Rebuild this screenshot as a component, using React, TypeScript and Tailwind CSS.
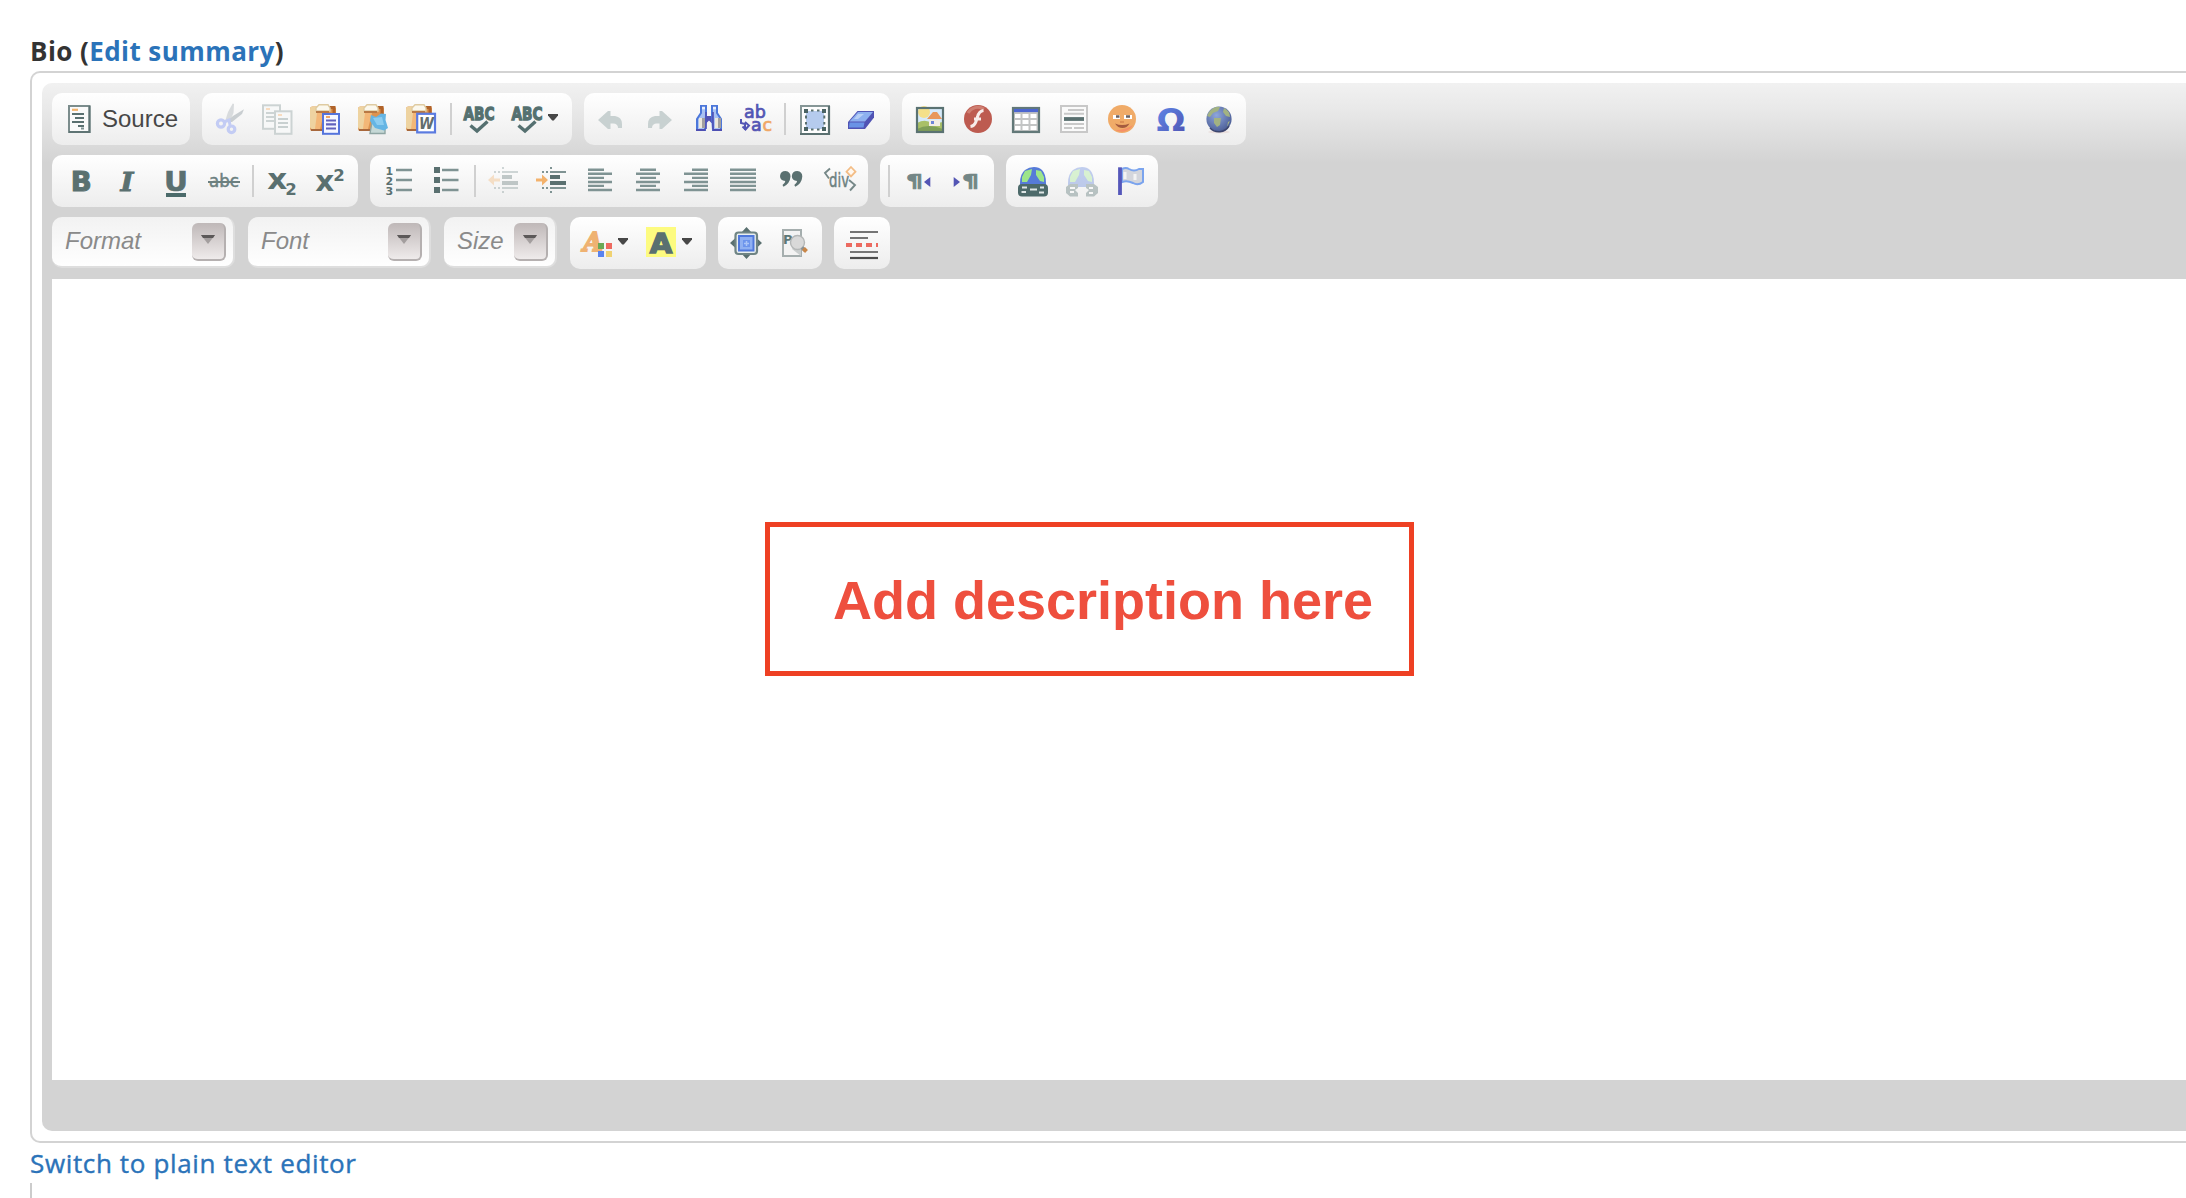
import type { ReactNode } from "react";

const DARK = "#5a7070";
const MID = "#7f9393";

function Glyph({ children, faded }: { children: ReactNode; faded?: boolean }) {
  return (
    <svg
      viewBox="0 0 32 32"
      className={faded ? "size-8 shrink-0 overflow-visible opacity-35" : "size-8 shrink-0 overflow-visible"}
      fontFamily="'DejaVu Sans', sans-serif"
    >
      {children}
    </svg>
  );
}

function Btn({ children, menu }: { children: ReactNode; menu?: boolean }) {
  return (
    <button className={menu ? "flex h-8 w-16 items-center pl-2" : "flex h-8 w-12 items-center pl-2"}>
      {children}
      {menu && (
        <svg viewBox="0 0 10 7" className="mt-[-3px] ml-1 h-[7px] w-2.5 shrink-0">
          <path d="M0 0H10V1.5L5.8 6.5H4.2L0 1.5Z" fill="#474747" />
        </svg>
      )}
    </button>
  );
}

function Group({ children }: { children: ReactNode }) {
  return (
    <div className="flex h-[52px] items-center rounded-[10px] bg-linear-to-b from-white to-[#ededed] px-1">
      {children}
    </div>
  );
}

const Sep = () => <div className="mx-1 h-8 w-0.5 bg-[#d0d0d0]" />;

function Combo({ label, wide }: { label: string; wide?: boolean }) {
  return (
    <div
      className={
        (wide ? "w-[183px]" : "w-[113px]") +
        " mr-px flex h-[51px] items-center justify-between rounded-[10px] border-r-2 border-b-2 border-[#dedede] bg-linear-to-b from-[#f2f2f2] to-white bg-origin-border pr-[7px] pl-[13px] text-2xl text-[#8a8a8a] italic"
      }
    >
      <span className="pb-px">{label}</span>
      <span className="flex h-[38px] w-[34px] items-center justify-center rounded-md border-r-2 border-b-2 border-[#b5b0b0] bg-linear-to-b from-[#bfb8b8] to-[#efebeb]">
        <svg viewBox="0 0 14 9" className="mt-[-2px] h-[9px] w-3.5">
          <path d="M0 0H14L7 9Z" fill="#a39e9e" />
          <path d="M0 0H14L12 3H2Z" fill="#5c5959" />
        </svg>
      </span>
    </div>
  );
}

const SourceIcon = () => (
  <Glyph>
    <rect x="5" y="3" width="20.5" height="26" fill="#fafafa" stroke="#7b8c8c" strokeWidth="2" />
    <path d="M25.5 3V29H5" fill="none" stroke="#5f7474" strokeWidth="2" />
    <path d="M8 6.8H14" stroke="#f3b36b" strokeWidth="2.2" />
    <path d="M8 11H20M11 15H20M8 19H20M14 23H20" stroke={DARK} strokeWidth="2" />
    <path d="M17 25.5H20" stroke={MID} strokeWidth="2" />
  </Glyph>
);

const CutIcon = () => (
  <Glyph>
    <path d="M18.7 0.5L20 1L19.5 10L15.5 19L11.5 17L14 9Z" fill="#d8dbdd" />
    <path d="M30 6.3L28 11L18 19L12 19L19 13Z" fill="#c9ced1" />
    <circle cx="7" cy="20.5" r="3.6" fill="none" stroke="#c3ccf4" strokeWidth="3.2" />
    <circle cx="17.5" cy="26.3" r="3.3" fill="none" stroke="#c3ccf4" strokeWidth="3.2" />
    <path d="M10 19L15 17L16 22" fill="none" stroke="#c3ccf4" strokeWidth="3" />
  </Glyph>
);

const CopyIcon = () => (
  <Glyph>
    <rect x="1" y="2.3" width="17" height="23.5" fill="#f7f8f8" stroke="#ccd3d3" strokeWidth="2" />
    <path d="M4 6H8" stroke="#f8dcc0" strokeWidth="2" />
    <path d="M4 10H13M4 14H12M4 18H12" stroke="#cdd4d4" strokeWidth="2" />
    <rect x="13" y="8.3" width="16.5" height="22.5" fill="#f7f8f8" stroke="#ccd3d3" strokeWidth="2" />
    <path d="M16 12H20" stroke="#f8dcc0" strokeWidth="2" />
    <path d="M16 16H26M16 20H26M16 24H26" stroke="#c8d0d0" strokeWidth="2" />
  </Glyph>
);

const Clipboard = () => (
  <>
    <rect x="0" y="3.5" width="26" height="24.5" rx="2.5" fill="#dd9350" />
    <path d="M2.5 3.5H7V26H2A2 2 0 0 1 0 24V6Q0 3.5 2.5 3.5Z" fill="#eed3a0" />
    <path d="M7 10L14 10L10 26H5Z" fill="#f3b777" />
    <path d="M1 27H13" stroke="#a8683c" strokeWidth="2" />
    <path d="M17 4.5H24V11" fill="none" stroke="#b0632a" strokeWidth="3" />
    <path d="M6 8V5L9 1.8H18L20 5V8Z" fill="#fbf8ee" stroke="#dfcba1" strokeWidth="1.4" />
    <path d="M6 9H19" stroke="#b87945" strokeWidth="2" />
  </>
);

const PasteIcon = () => (
  <Glyph>
    <Clipboard />
    <rect x="13" y="11" width="16" height="19.8" fill="#f5f7ff" stroke="#5474dc" strokeWidth="2" />
    <path d="M16 14H20" stroke="#f0a765" strokeWidth="2" />
    <path d="M16 17.5H26M16 21.3H26M16 25.5H26" stroke="#6062bd" strokeWidth="2.2" />
  </Glyph>
);

const PasteTextIcon = () => (
  <Glyph>
    <Clipboard />
    <path d="M14 19L12 30.5H27V24Z" fill="#c5d8d6" stroke="#8ea5a3" strokeWidth="1.4" />
    <path d="M13 12L18 14L23 10.5L28 11L27.5 17L30 25L26 27.5L17 25L12 18Z" fill="#65b5e4" />
    <path d="M15 15L24 14L26 22L19 22Z" fill="#8dcdf0" />
  </Glyph>
);

const PasteWordIcon = () => (
  <Glyph>
    <Clipboard />
    <rect x="11.2" y="10.8" width="17.8" height="18.6" fill="#fff" stroke="#5b7be0" strokeWidth="2.2" />
    <text x="13" y="26" fontSize="16" fontWeight="700" fontStyle="italic" textLength="15" lengthAdjust="spacingAndGlyphs" fill="#626d6d">W</text>
  </Glyph>
);

const SpellIcon = () => (
  <Glyph>
    <text x="-0.5" y="17.4" fontSize="17.8" fontWeight="700" textLength="31" lengthAdjust="spacingAndGlyphs" fill="#557070" stroke="#557070" strokeWidth="1.3">ABC</text>
    <path d="M6.5 22.5L13 28L23.5 18.5" fill="none" stroke="#557070" strokeWidth="3.4" />
  </Glyph>
);

const UndoShape = () => (
  <path d="M2 17L12 8H14.5V13H19Q26 14 26 21V25H22Q22 20.5 17 20.5H14.5V26H12Z" fill="#c8d1d1" />
);

const FindIcon = () => (
  <Glyph>
    <path d="M11 13H23V20H19.5L17 17.5L14.5 20H11Z" fill="#5454b4" />
    <path d="M9 3H14V12L13 27H5V16L9 10Z" fill="#a9c2f2" stroke="#4c77da" strokeWidth="2" />
    <path d="M20 3H25V10L29 16V27H21L20 12Z" fill="#a9c2f2" stroke="#4c77da" strokeWidth="2" />
    <path d="M7 15H10V25H7ZM23 15H26V25H23Z" fill="#ece9dc" />
    <path d="M10 15H13V25H10ZM26 15H29V25H26Z" fill="#a2a0a0" />
    <path d="M4 27H13.5M20.5 27H30" stroke="#4e4fb2" strokeWidth="2" />
    <path d="M14 9V26M21 9V26" stroke="#4f50b5" strokeWidth="1.6" />
    <path d="M10 5H13M21 5H24" stroke="#e9effc" strokeWidth="2.4" />
  </Glyph>
);

const ReplaceIcon = () => (
  <Glyph>
    <text fontSize="17.5" fill="#5355b4" stroke="#5355b4" strokeWidth="0.7">
      <tspan x="4" y="15">ab</tspan>
      <tspan x="11" y="28.3">a</tspan>
      <tspan x="22.5" y="28.3" fill="#f0a765" stroke="#f0a765">c</tspan>
    </text>
    <path d="M1 16V20L5 21V27M2.5 23.5L5.5 26.5L9 22.5L5 19" fill="none" stroke="#5355b4" strokeWidth="2" />
  </Glyph>
);

const SelectAllIcon = () => (
  <Glyph>
    <rect x="3" y="3" width="28" height="28" fill="#fdfdfd" stroke="#869696" strokeWidth="2" />
    <path d="M31 3V31H2" fill="none" stroke="#5a7070" strokeWidth="2.2" />
    <rect x="8" y="8" width="18" height="18" fill="#b5cbee" />
    <path d="M13 7.6H15.5M19 7.6H21.5M13 26.4H15.5M19 26.4H21.5M8 12.5V15.5M8 19V21.5M26.3 12.5V15.5M26.3 19V21.5" stroke={DARK} strokeWidth="2" />
    <path d="M6 6H10V10H6ZM24 6H28V10H24ZM6 24H10V28H6ZM24 24H28V28H24Z" fill="#4b6464" />
  </Glyph>
);

const EraserIcon = () => (
  <Glyph>
    <path d="M11.5 8H28V14.5L19 26H2V19Z" fill="#5053b4" />
    <path d="M12 9L27 9L19 18.5H3.5Z" fill="#8db0ef" />
    <path d="M12 11L18 11L12 16H8Z" fill="#b8cff6" />
    <path d="M3.5 19.5H18.5L17.5 24.5H3Z" fill="#6a93e6" />
  </Glyph>
);

const ImageIcon = () => (
  <Glyph>
    <rect x="2" y="4" width="28" height="26" fill="#d6eafa" />
    <circle cx="10" cy="9" r="6" fill="#f4e089" />
    <path d="M3 20Q12 15 18 21L29 19V29H3Z" fill="#a9c067" />
    <path d="M3 26Q14 20 29 26V29H3Z" fill="#7f9e58" />
    <path d="M15 17H26V23H15Z" fill="#f3ede4" />
    <path d="M13 16L19 9H23L28 16Z" fill="#e8975a" />
    <rect x="17" y="18" width="3" height="3" fill="#6f86d8" />
    <rect x="3" y="5" width="26" height="24" fill="none" stroke="#5a7272" strokeWidth="2.2" />
  </Glyph>
);

const FlashIcon = () => (
  <Glyph>
    <circle cx="16" cy="16" r="14" fill="#bd5b50" />
    <path d="M6 10A11.5 11.5 0 0 1 22 6" fill="none" stroke="#cf7f72" strokeWidth="3" />
    <path d="M21.5 7.5Q17 8 15.5 14L14 18.5Q12.5 23 8.5 23.5M12 16H19" fill="none" stroke="#f7ecea" strokeWidth="3" />
  </Glyph>
);

const TableIcon = () => (
  <Glyph>
    <rect x="3" y="5" width="26" height="24" fill="#c2c4c4" stroke="#627878" strokeWidth="2.2" />
    <path d="M4 7.5H28" stroke="#4c66d0" strokeWidth="3.2" />
    <path d="M5 11H10.5V15H5ZM12.5 11H18.5V15H12.5ZM20.5 11H26.5V15H20.5ZM5 17H10.5V21H5ZM12.5 17H18.5V21H12.5ZM20.5 17H26.5V21H20.5ZM5 23H10.5V27H5ZM12.5 23H18.5V27H12.5ZM20.5 23H26.5V27H20.5Z" fill="#fff" />
  </Glyph>
);

const RuleIcon = () => (
  <Glyph>
    <rect x="3" y="3" width="26" height="26" fill="#fafafa" stroke="#c8c8c8" strokeWidth="2" />
    <path d="M10 7H26M6 10.8H26M6 21H26M6 25H14M16 25H26" stroke="#c9c9c9" strokeWidth="2" />
    <path d="M6 16H26" stroke="#5a7070" strokeWidth="3.8" />
  </Glyph>
);

const SmileyIcon = () => (
  <Glyph>
    <circle cx="16" cy="16" r="14" fill="#f0ab68" />
    <path d="M27 22A13 13 0 0 1 9 27Q20 27 27 22Z" fill="#f59068" />
    <path d="M7 12H14V16H7ZM18 12H26V16H18Z" fill="#fff" />
    <path d="M10 13.5H13.5M20 13.5H24" stroke="#6b6262" strokeWidth="2.6" />
    <path d="M9 20.5Q16 23.5 23.5 20.5Q21 25 16.5 25Q12 25 9 20.5Z" fill="#a55b3f" />
    <path d="M14 19H18" stroke="#d98950" strokeWidth="1.6" />
  </Glyph>
);

const OmegaIcon = () => (
  <Glyph>
    <defs>
      <linearGradient id="omega" x1="0" y1="0" x2="1" y2="1">
        <stop offset="0" stopColor="#5f8cec" />
        <stop offset="1" stopColor="#5051b0" />
      </linearGradient>
    </defs>
    <text x="2.6" y="27.6" fontSize="31.5" fontWeight="700" textLength="28.8" lengthAdjust="spacingAndGlyphs" fill="url(#omega)">Ω</text>
  </Glyph>
);

const GlobeIcon = () => (
  <Glyph>
    <defs>
      <radialGradient id="globe" cx="0.4" cy="0.35" r="0.7">
        <stop offset="0" stopColor="#8ea6dc" />
        <stop offset="1" stopColor="#4a5c94" />
      </radialGradient>
    </defs>
    <ellipse cx="17" cy="29" rx="11" ry="1.5" fill="#eadfdd" />
    <circle cx="17" cy="16" r="12.6" fill="url(#globe)" />
    <path d="M7 9Q12 3 18 4L16 8L11 10L8 14L5 13ZM22 5Q28 8 28 14L24 13L21 9ZM12 15L19 15L18 22L15 24L12 20ZM26 19L28 18L25 24Z" fill="#a2b282" />
    <path d="M8 25A12 12 0 0 0 27 23" fill="none" stroke="#3d466e" strokeWidth="1.5" />
  </Glyph>
);

const BoldIcon = () => (
  <Glyph>
    <text x="6.8" y="25.7" fontSize="26.5" fontWeight="700" textLength="21" lengthAdjust="spacingAndGlyphs" fill={DARK} stroke={DARK} strokeWidth="1">B</text>
  </Glyph>
);
const ItalicIcon = () => (
  <Glyph>
    <text x="8.6" y="25.7" fontSize="26.5" fontWeight="700" fontStyle="italic" fontFamily="'DejaVu Serif', serif" textLength="13" lengthAdjust="spacingAndGlyphs" fill={DARK} stroke={DARK} strokeWidth="0.8">I</text>
  </Glyph>
);
const UnderlineIcon = () => (
  <Glyph>
    <text x="4" y="25.6" fontSize="26.5" fontWeight="700" textLength="24" lengthAdjust="spacingAndGlyphs" fill={DARK} stroke={DARK} strokeWidth="0.6">U</text>
    <path d="M6 30H26" stroke="#4b6a6a" strokeWidth="4" />
  </Glyph>
);
const StrikeIcon = () => (
  <Glyph>
    <text x="1" y="22" fontSize="18.5" textLength="30" lengthAdjust="spacingAndGlyphs" fill="#6c8080" stroke="#6c8080" strokeWidth="0.5">abc</text>
    <path d="M0 17H32" stroke="#6c8080" strokeWidth="2" />
  </Glyph>
);
const SubIcon = () => (
  <Glyph>
    <text x="1.2" y="24" fontSize="28" fontWeight="700" textLength="20" lengthAdjust="spacingAndGlyphs" fill={DARK}>x</text>
    <text x="19.2" y="30" fontSize="16" fontWeight="700" textLength="11.5" lengthAdjust="spacingAndGlyphs" fill={DARK}>2</text>
  </Glyph>
);
const SupIcon = () => (
  <Glyph>
    <text x="1.2" y="26" fontSize="28" fontWeight="700" textLength="19" lengthAdjust="spacingAndGlyphs" fill={DARK}>x</text>
    <text x="19.2" y="16" fontSize="16" fontWeight="700" textLength="11.5" lengthAdjust="spacingAndGlyphs" fill={DARK}>2</text>
  </Glyph>
);

const NumberedIcon = () => (
  <Glyph>
    <g fontSize="11" fontWeight="700" fill={DARK}>
      <text x="3.5" y="9.5">1</text>
      <text x="3.5" y="20">2</text>
      <text x="3.5" y="30">3</text>
    </g>
    <path d="M14 5H30M14 15H30M14 25H30" stroke={MID} strokeWidth="2.4" />
  </Glyph>
);
const BulletedIcon = () => (
  <Glyph>
    <path d="M4 2H10V8H4ZM4 12H10V18H4ZM4 22H10V28H4Z" fill={DARK} />
    <path d="M12 5H28.5M12 15H28.5M12 25H28.5" stroke={MID} strokeWidth="2.4" />
  </Glyph>
);

const IndentLines = () => (
  <>
    <path d="M14 7H30M14 23H30" stroke={MID} strokeWidth="2.2" />
    <path d="M14 12H24M14 18H30" stroke={DARK} strokeWidth="3.8" />
    <path d="M6 7H8M10 7H12M6 23H8M10 23H12M14 3H16M14 27H16" stroke={MID} strokeWidth="2.2" />
  </>
);
const OutdentIcon = () => (
  <Glyph faded>
    <path d="M0 15L6 9.5V13.5H12V16.5H6V20.5Z" fill="#f3b26c" />
    <IndentLines />
  </Glyph>
);
const IndentIcon = () => (
  <Glyph>
    <path d="M12 15L6 9.5V13.5H0V16.5H6V20.5Z" fill="#f3b26c" />
    <IndentLines />
  </Glyph>
);

const Lines = ({ d }: { d: string }) => (
  <Glyph>
    <path d={d} stroke={MID} strokeWidth="2.4" />
  </Glyph>
);

const QuoteIcon = () => (
  <Glyph>
    <path d="M9.5 6Q14.5 6.5 14.5 11.5Q14 18.5 7.5 21.7L6.5 20Q9.5 17.5 9.3 16Q4 15.5 4 11Q4.5 6 9.5 6Z" fill={DARK} />
    <path d="M21.3 6Q26.3 6.5 26.3 11.5Q25.8 18.5 19.3 21.7L18.3 20Q21.3 17.5 21.1 16Q15.8 15.5 15.8 11Q16.3 6 21.3 6Z" fill={DARK} />
  </Glyph>
);

const DivIcon = () => (
  <Glyph>
    <path d="M6 3.5L1 8L5 13.5M25 15L31 20L26 25.5" fill="none" stroke="#768888" strokeWidth="1.9" />
    <text x="5" y="22" fontSize="19" textLength="20" lengthAdjust="spacingAndGlyphs" fill="#6c8080" stroke="#6c8080" strokeWidth="0.5">div</text>
    <path d="M27 2L31.5 6.7L27 11.4L22.5 6.7Z" fill="#fff8f0" stroke="#f3bd86" strokeWidth="1.8" />
  </Glyph>
);

const Pilcrow = ({ x }: { x: number }) => (
  <text x={x} y="22.2" fontSize="18.5" fontWeight="700" textLength="17" lengthAdjust="spacingAndGlyphs" fill="#738686" stroke="#738686" strokeWidth="0.7">¶</text>
);
const LtrIcon = () => (
  <Glyph>
    <Pilcrow x={4} />
    <path d="M28.3 12V22L22 17Z" fill="#5355b4" />
  </Glyph>
);
const RtlIcon = () => (
  <Glyph>
    <path d="M3.7 12V22L10 17Z" fill="#5355b4" />
    <Pilcrow x={12} />
  </Glyph>
);

const LinkGlobe = () => (
  <>
    <path d="M2 18Q2 9 7 5Q11 2 16 2Q21 2 24 5Q28 9 28 18V22H2Z" fill="#567bd8" />
    <path d="M7 6L14 4L13 10L9 17H4V12ZM18 5L23 6L26 12V17L22 16L18 10Z" fill="#9de58b" />
  </>
);
const LinkIcon = () => (
  <Glyph>
    <LinkGlobe />
    <rect x="0" y="19" width="30" height="12.6" rx="4" fill="#4d6a6a" />
    <path d="M4 22.5H9M3.5 27H8M12 24.5H19M22 22.5H26M21 27.5H26" stroke="#dfe6e6" strokeWidth="2" />
  </Glyph>
);
const UnlinkIcon = () => (
  <Glyph faded>
    <LinkGlobe />
    <path d="M4 19H12V23L9 25L12 28V31.6H4L0 28V22ZM20 19H28L32 22V28L28 31.6H20V28L23 25L20 23Z" fill="#4d6a6a" />
    <path d="M4 23H9M4 27H8M23 23H27M23 28H27" stroke="#fff" strokeWidth="2" />
  </Glyph>
);
const AnchorIcon = () => (
  <Glyph>
    <path d="M8 4Q12 2 15 4Q20 7 25 4H29V17Q24 21 19 18Q13 15 8 17Z" fill="#d4d6dc" stroke="#7ba4ee" strokeWidth="2" />
    <path d="M11 7V14M21 9V15" stroke="#f3f3f3" strokeWidth="3" />
    <path d="M6 2.3V30" stroke="#5557ba" strokeWidth="3.8" />
  </Glyph>
);

const TextColorIcon = () => (
  <Glyph>
    <text x="1.2" y="24" fontSize="26" fontWeight="700" fontFamily="'DejaVu Serif', serif" fontStyle="italic" textLength="19.5" lengthAdjust="spacingAndGlyphs" fill="#efb272" stroke="#efb272" strokeWidth="1.8">A</text>
    <rect x="16" y="16" width="6" height="6" fill="#6aa956" />
    <rect x="24" y="16" width="6" height="6" fill="#ee6a60" />
    <rect x="16" y="24" width="6" height="6" fill="#5a83ee" />
    <rect x="24" y="24" width="6" height="6" fill="#f0d272" />
  </Glyph>
);
const BgColorIcon = () => (
  <Glyph>
    <rect width="30" height="30" fill="#fdfb80" />
    <text x="3.8" y="25.7" fontSize="26" fontWeight="700" textLength="22.5" lengthAdjust="spacingAndGlyphs" fill={DARK} stroke={DARK} strokeWidth="1.4">A</text>
  </Glyph>
);
const MaximizeIcon = () => (
  <Glyph>
    <path d="M16.5 0L22 6H11ZM16.5 32L22 26H11ZM0 16L6 10.5V21.5ZM32 16L26 10.5V21.5Z" fill="#5a7070" />
    <rect x="5.5" y="5.5" width="21.5" height="21.5" rx="3" fill="#e9efef" stroke="#6f8484" strokeWidth="2.2" />
    <rect x="9" y="9" width="14.5" height="14.5" fill="#8fb0f2" stroke="#4f78dc" strokeWidth="2" />
    <path d="M13 13H20V20H13Z" fill="#6c94ec" />
    <path d="M14 16.5H19M16.5 14V19" stroke="#a9c4f7" strokeWidth="1.5" />
  </Glyph>
);
const PreviewIcon = () => (
  <Glyph>
    <path d="M5 3H23V29H5Z" fill="#f3f3f3" stroke="#a5aeae" strokeWidth="2" />
    <path d="M14 22L23 29V10" fill="#c9cdcd" />
    <text x="5" y="17" fontSize="13" fontWeight="700" fill="#5c7878">P</text>
    <circle cx="19.5" cy="15.5" r="7" fill="#d9d9d9" stroke="#b4b7b7" strokeWidth="1.4" />
    <path d="M24 20.5L27 23.5" stroke="#8a8f92" strokeWidth="3.5" />
    <path d="M25.5 21.5L28.5 24.5" stroke="#c98647" strokeWidth="4" />
  </Glyph>
);
const PageBreakIcon = () => (
  <Glyph>
    <path d="M4 5H32M4 11H22M4 25H32" stroke="#757575" strokeWidth="2.2" />
    <path d="M4 31H32" stroke="#4b4b4b" strokeWidth="2.2" />
    <path d="M0 18H6M10 18H16M20 18H26M30 18H32" stroke="#ec6a60" strokeWidth="4" />
  </Glyph>
);

function Toolbar() {
  return (
    <div className="flex flex-col gap-2.5">
      <div className="flex gap-3">
        <Group>
          <button className="flex h-8 w-[130px] items-center pl-2 text-2xl text-[#474747]">
            <SourceIcon />
            <span className="ml-1.5">Source</span>
          </button>
        </Group>
        <Group>
          <Btn><CutIcon /></Btn>
          <Btn><CopyIcon /></Btn>
          <Btn><PasteIcon /></Btn>
          <Btn><PasteTextIcon /></Btn>
          <Btn><PasteWordIcon /></Btn>
          <Sep />
          <Btn><SpellIcon /></Btn>
          <Btn menu><SpellIcon /></Btn>
        </Group>
        <Group>
          <Btn><Glyph><UndoShape /></Glyph></Btn>
          <Btn><Glyph><g transform="translate(30 0) scale(-1 1)"><UndoShape /></g></Glyph></Btn>
          <Btn><FindIcon /></Btn>
          <Btn><ReplaceIcon /></Btn>
          <Sep />
          <Btn><SelectAllIcon /></Btn>
          <Btn><EraserIcon /></Btn>
        </Group>
        <Group>
          <Btn><ImageIcon /></Btn>
          <Btn><FlashIcon /></Btn>
          <Btn><TableIcon /></Btn>
          <Btn><RuleIcon /></Btn>
          <Btn><SmileyIcon /></Btn>
          <Btn><OmegaIcon /></Btn>
          <Btn><GlobeIcon /></Btn>
        </Group>
      </div>
      <div className="flex gap-3">
        <Group>
          <Btn><BoldIcon /></Btn>
          <Btn><ItalicIcon /></Btn>
          <Btn><UnderlineIcon /></Btn>
          <Btn><StrikeIcon /></Btn>
          <Sep />
          <Btn><SubIcon /></Btn>
          <Btn><SupIcon /></Btn>
        </Group>
        <Group>
          <Btn><NumberedIcon /></Btn>
          <Btn><BulletedIcon /></Btn>
          <Sep />
          <Btn><OutdentIcon /></Btn>
          <Btn><IndentIcon /></Btn>
          <Btn><Lines d="M4 4.8H20M4 8.8H28M4 12.9H20M4 17H28M4 20.9H20M4 25H28" /></Btn>
          <Btn><Lines d="M8 4.8H24M4 8.8H28M8 12.9H24M4 17H28M8 20.9H24M4 25H28" /></Btn>
          <Btn><Lines d="M12 4.8H28M4 8.8H28M12 12.9H28M4 17H28M12 20.9H28M4 25H28" /></Btn>
          <Btn><Lines d="M2 4.8H28M2 8.8H28M2 12.9H28M2 17H28M2 20.9H28M2 25H28" /></Btn>
          <Btn><QuoteIcon /></Btn>
          <Btn><DivIcon /></Btn>
        </Group>
        <Group>
          <Sep />
          <Btn><LtrIcon /></Btn>
          <Btn><RtlIcon /></Btn>
        </Group>
        <Group>
          <Btn><LinkIcon /></Btn>
          <Btn><UnlinkIcon /></Btn>
          <Btn><AnchorIcon /></Btn>
        </Group>
      </div>
      <div className="flex gap-3">
        <Combo label="Format" wide />
        <Combo label="Font" wide />
        <Combo label="Size" />
        <Group>
          <Btn menu><TextColorIcon /></Btn>
          <Btn menu><BgColorIcon /></Btn>
        </Group>
        <Group>
          <Btn><MaximizeIcon /></Btn>
          <Btn><PreviewIcon /></Btn>
        </Group>
        <Group>
          <Btn><PageBreakIcon /></Btn>
        </Group>
      </div>
    </div>
  );
}

export default function App() {
  return (
    <div className="flex h-[1198px] w-[2186px] flex-col overflow-hidden bg-white pl-[30px] font-['Liberation_Sans',sans-serif]">
      <div className="h-[71px] pt-[33px] font-['Open_Sans',sans-serif] text-[26px] leading-9 font-bold tracking-[0.43px] whitespace-nowrap text-[#333]">
        Bio (<a className="text-[#2b73b9]">Edit summary</a>)
      </div>
      <div className="h-[1072px] rounded-l-[10px] border-2 border-r-0 border-[#d3d3d3] py-2.5 pl-2.5">
        <div className="flex h-full flex-col rounded-l-[10px] bg-[#d3d3d3] bg-[linear-gradient(to_bottom,#f1f1f1_0px,#e9e9e9_25px,#d3d3d3_80px)] py-2.5 pl-2.5">
          <Toolbar />
          <div className="mt-2.5 flex h-[801px] items-start bg-white pt-[243px] pl-[713px]">
            <div className="flex h-[154px] w-[649px] items-center border-5 border-[#ee4023] pt-0.5 pl-[63px] text-[54px] leading-none font-bold whitespace-nowrap text-[#ee4f3e]">
              Add description here
            </div>
          </div>
        </div>
      </div>
      <a className="h-10 pt-0.5 font-['Open_Sans',sans-serif] text-[26px] leading-9 font-medium tracking-[0.64px] whitespace-nowrap text-[#2b73b9] [-webkit-text-stroke:0.4px_#2b73b9]">
        Switch to plain text editor
      </a>
      <div className="h-[15px] border-l-2 border-[#ccc]" />
    </div>
  );
}
